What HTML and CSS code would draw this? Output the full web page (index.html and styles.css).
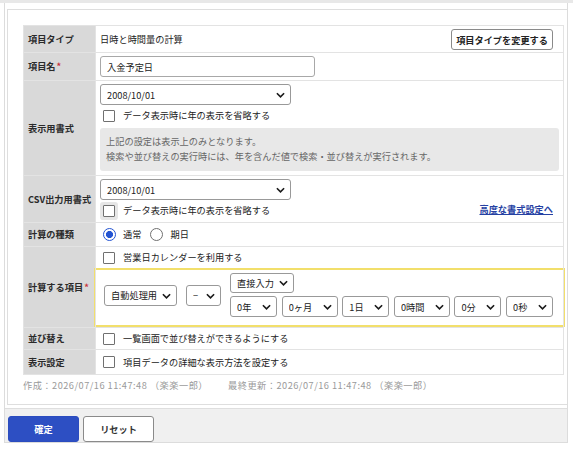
FILE: index.html
```html
<!DOCTYPE html>
<html lang="ja">
<head>
  <meta charset="UTF-8">
  <meta name="viewport" content="width=device-width, initial-scale=1.0">
  <title>項目の編集</title>
  <link rel="stylesheet" href="styles.css">
</head>
<body>
  <div class="topbar"></div>
  <div class="frame">
    <div class="content">
      <div class="panel">
        <table class="form-table">
          <tr class="r-type">
            <th>項目タイプ</th>
            <td>
              <div class="line-between">
                <span>日時と時間量の計算</span>
                <button class="btn-small">項目タイプを変更する</button>
              </div>
            </td>
          </tr>
          <tr class="r-name">
            <th>項目名<span class="req">*</span></th>
            <td><input type="text" class="text-input" value="入金予定日"></td>
          </tr>
          <tr class="r-format">
            <th>表示用書式</th>
            <td>
              <span class="sel w-date">
                <select><option>2008/10/01</option></select>
                <svg class="chev" viewBox="0 0 10 6" width="9" height="6"><path d="M1 1l4 4 4-4"/></svg>
              </span>
              <label class="check-line"><input type="checkbox"><span>データ表示時に年の表示を省略する</span></label>
              <div class="note">
                上記の設定は表示上のみとなります。<br>
                検索や並び替えの実行時には、年を含んだ値で検索・並び替えが実行されます。
              </div>
            </td>
          </tr>
          <tr class="r-csv">
            <th>CSV出力用書式</th>
            <td>
              <span class="sel w-date">
                <select><option>2008/10/01</option></select>
                <svg class="chev" viewBox="0 0 10 6" width="9" height="6"><path d="M1 1l4 4 4-4"/></svg>
              </span>
              <div class="line-between">
                <label class="check-line"><input type="checkbox" class="focused"><span>データ表示時に年の表示を省略する</span></label>
                <a href="#" class="link">高度な書式設定へ</a>
              </div>
            </td>
          </tr>
          <tr class="r-kind">
            <th>計算の種類</th>
            <td>
              <div class="radios">
                <label class="radio-line"><input type="radio" name="kind" checked><span>通常</span></label>
                <label class="radio-line"><input type="radio" name="kind"><span>期日</span></label>
              </div>
            </td>
          </tr>
          <tr class="r-calc">
            <th>計算する項目<span class="req">*</span></th>
            <td>
              <label class="check-line"><input type="checkbox"><span>営業日カレンダーを利用する</span></label>
              <div class="calc-box">
                <span class="sel w-auto">
                  <select><option>自動処理用</option></select>
                  <svg class="chev" viewBox="0 0 10 6" width="9" height="6"><path d="M1 1l4 4 4-4"/></svg>
                </span>
                <span class="sel w-op">
                  <select><option>−</option></select>
                  <svg class="chev" viewBox="0 0 10 6" width="9" height="6"><path d="M1 1l4 4 4-4"/></svg>
                </span>
                <div class="amount">
                  <span class="sel w-input">
                    <select><option>直接入力</option></select>
                    <svg class="chev" viewBox="0 0 10 6" width="9" height="6"><path d="M1 1l4 4 4-4"/></svg>
                  </span>
                  <div class="units">
                    <span class="sel w-s"><select><option>0年</option></select><svg class="chev" viewBox="0 0 10 6" width="9" height="6"><path d="M1 1l4 4 4-4"/></svg></span>
                    <span class="sel w-l"><select><option>0ヶ月</option></select><svg class="chev" viewBox="0 0 10 6" width="9" height="6"><path d="M1 1l4 4 4-4"/></svg></span>
                    <span class="sel w-s"><select><option>1日</option></select><svg class="chev" viewBox="0 0 10 6" width="9" height="6"><path d="M1 1l4 4 4-4"/></svg></span>
                    <span class="sel w-l"><select><option>0時間</option></select><svg class="chev" viewBox="0 0 10 6" width="9" height="6"><path d="M1 1l4 4 4-4"/></svg></span>
                    <span class="sel w-s"><select><option>0分</option></select><svg class="chev" viewBox="0 0 10 6" width="9" height="6"><path d="M1 1l4 4 4-4"/></svg></span>
                    <span class="sel w-s"><select><option>0秒</option></select><svg class="chev" viewBox="0 0 10 6" width="9" height="6"><path d="M1 1l4 4 4-4"/></svg></span>
                  </div>
                </div>
              </div>
            </td>
          </tr>
          <tr class="r-sort">
            <th>並び替え</th>
            <td><label class="check-line"><input type="checkbox"><span>一覧画面で並び替えができるようにする</span></label></td>
          </tr>
          <tr class="r-view">
            <th>表示設定</th>
            <td><label class="check-line"><input type="checkbox"><span>項目データの詳細な表示方法を設定する</span></label></td>
          </tr>
        </table>
        <div class="meta">
          <span>作成：2026/07/16 11:47:48 （楽楽一郎）</span>
          <span>最終更新：2026/07/16 11:47:48 （楽楽一郎）</span>
        </div>
      </div>
    </div>
    <div class="footer">
      <button class="btn btn-primary">確定</button>
      <button class="btn btn-reset">リセット</button>
    </div>
  </div>
</body>
</html>
```

FILE: styles.css
```css
* { box-sizing: border-box; }
body { margin: 0; background: #fff; font-family: "Noto Sans CJK JP", "Noto Sans", sans-serif; font-size: 9.2px; line-height: 13px; color: #222; }

.topbar { height: 3px; background: #e8e8e8; }
.frame { margin: 0 5px 0 4px; height: 440px; border: 1px solid #dcdcdc; border-top: none; display: flex; flex-direction: column; }
.content { padding: 6px 0 0 2px; height: 404px; }
.panel { height: 396px; border: 1px solid #dedede; border-right: none; padding: 15px 3px 0 15px; }

/* form table, one fixed height per row */
.form-table { width: 100%; border-collapse: collapse; }
.form-table th, .form-table td { border: 1px solid #e3e3e3; }
.form-table th { width: 72px; background: #d9d9d9; text-align: left; padding: 0 4px; font-weight: bold; color: #2a2a2a; white-space: nowrap; }
.form-table td { padding: 0 4px; vertical-align: middle; }
.req { color: #c8323a; margin-left: 1px; }

.r-type { height: 27px; }
.r-name { height: 28px; }
.r-format { height: 95px; }
.r-csv { height: 47px; }
.r-kind { height: 24px; }
.r-calc { height: 80px; }
.r-sort { height: 22px; }
.r-view { height: 25px; }
.r-format td, .r-csv td, .r-calc td { vertical-align: top; padding-top: 3px; }
.r-sort .check-line, .r-view .check-line, .r-calc .check-line { margin-top: 0; }
.r-type td { padding-top: 1px; }

.line-between { display: flex; align-items: center; justify-content: space-between; }

.btn-small { display: block; height: 21px; margin-right: 6px; padding: 0 4px; border: 1px solid #8a8a8a; border-radius: 3px; background: #fff; font: bold 9.2px "Noto Sans CJK JP", sans-serif; color: #222; }

.text-input { display: block; width: 215px; height: 21px; padding: 0 6px; border: 1px solid #a8a8a8; border-radius: 3px; font: 9.2px "Noto Sans CJK JP", sans-serif; color: #222; }

/* selects */
.sel { position: relative; display: block; height: 21px; }
.sel select { display: block; appearance: none; -webkit-appearance: none; width: 100%; height: 100%; padding: 0 16px 0 6px; border: 1px solid #999; border-radius: 3px; background: #fff; font: 9.2px "Noto Sans CJK JP", sans-serif; color: #222; }
.sel .chev { position: absolute; right: 6px; top: 8px; pointer-events: none; }
.chev path { fill: none; stroke: #1a1a1a; stroke-width: 1.8; }
.w-date { width: 191px; }
.w-auto { width: 73px; }
.w-op { width: 35px; }
.w-input { width: 64px; height: 20px; }
.w-input .chev { top: 7px; }
.w-s { width: 47px; }
.w-l { width: 56px; }

/* checkboxes and radios */
.check-line { display: flex; align-items: center; width: max-content; height: 15px; margin-top: 3px; }
.check-line input { appearance: none; -webkit-appearance: none; width: 12px; height: 12px; margin: 0 8px 0 3px; border: 1px solid #707070; border-radius: 1px; background: #fff; }
.check-line input.focused { box-shadow: 0 0 0 3px #e6e6e6; }
.radios { display: flex; height: 17px; }
.radio-line { display: flex; align-items: center; margin-right: 6px; }
.radio-line input { appearance: none; -webkit-appearance: none; width: 13px; height: 13px; margin: 0 7px 0 3px; border: 1px solid #707070; border-radius: 50%; background: #fff; }
.radio-line input:checked { border: 1.5px solid #2454d2; background: radial-gradient(circle, #2454d2 0 3.3px, #fff 3.8px); }

.note { margin-top: 5px; padding: 6px 6px 7px; background: #e8e8e8; border-radius: 3px; color: #666; line-height: 15px; }

.link { margin-right: 6px; color: #2541a3; font-weight: bold; text-decoration: underline; }

/* highlighted calculation area */
.calc-box { display: flex; align-items: center; gap: 9px; margin: 3px -6px 0; padding: 3px 8px 8px; border: 2px solid #f2df6b; }
.amount { display: flex; flex-direction: column; gap: 3px; }
.units { display: flex; gap: 4.6px; }

.meta { display: flex; gap: 20px; margin-top: 4px; color: #9a9a9a; letter-spacing: 0.5px; }

/* footer buttons */
.footer { flex: 1; margin-top: 2px; padding: 7px 0 0 3px; background: #f0f0f0; border-top: 1px solid #dedede; display: flex; align-items: flex-start; gap: 4px; }
.btn { width: 71px; height: 26px; border-radius: 3px; font: bold 9.2px "Noto Sans CJK JP", sans-serif; }
.btn-primary { border: 1px solid #2b4cbf; background: #2d4fc3; color: #fff; }
.btn-reset { border: 1px solid #8a8a8a; background: #fff; color: #333; }
```
